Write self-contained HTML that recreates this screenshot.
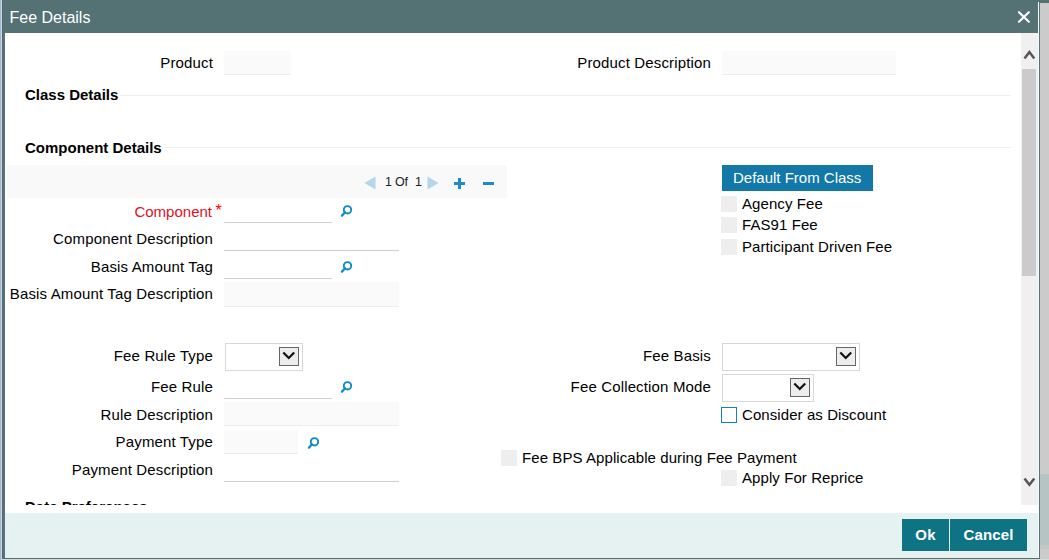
<!DOCTYPE html>
<html><head><meta charset="utf-8">
<style>
html,body{margin:0;padding:0;}
body{width:1049px;height:560px;position:relative;overflow:hidden;background:#cbcbcb;font-family:"Liberation Sans",sans-serif;}
.a{position:absolute;}
.t{position:absolute;font-size:15px;line-height:17px;white-space:nowrap;color:#000;letter-spacing:0.15px;}
.r{text-align:right;}
.b{font-weight:bold;}
.inp{position:absolute;border-bottom:1px solid #d0d0d0;height:0;}
.box{position:absolute;background:#fafafa;border-bottom:1px solid #ededed;}
.chk{position:absolute;width:16px;height:16px;background:#eeeeee;}
.sel{position:absolute;border:1px solid #d8d8d8;background:#fff;box-sizing:border-box;}
.selb{position:absolute;box-sizing:border-box;border:1px solid #666;background:#ededed;}
.srch{position:absolute;width:12px;height:12px;}
</style></head><body>
<svg width="0" height="0" style="position:absolute"><defs>
<symbol id="srch" viewBox="0 0 13 13"><circle cx="7.5" cy="5.8" r="3.7" stroke="#0a88cc" stroke-width="1.9" fill="none"/><path d="M5 8.3L1.9 11.7" stroke="#0a88cc" stroke-width="2.2" stroke-linecap="round"/></symbol>
<symbol id="chev" viewBox="0 0 20 19"><path d="M4.3 5.5L9.75 11L15.2 5.5" stroke="#111" stroke-width="2.2" fill="none"/></symbol>
</defs></svg>
<!-- left strip -->
<div class="a" style="left:0;top:0;width:1px;height:560px;background:#a4b8cc"></div>
<div class="a" style="left:1px;top:0;width:1px;height:560px;background:#ccd8ea"></div>
<div class="a" style="left:1040px;top:474px;width:9px;height:71px;background:#b6c4c4"></div>
<div class="a" style="left:1040px;top:545px;width:9px;height:4px;background:#c0c8c8"></div>
<!-- top teal band -->
<div class="a" style="left:2px;top:0;width:1047px;height:3px;background:#547174"></div>
<!-- dialog -->
<div class="a" style="left:2px;top:0;width:1px;height:559px;background:#56666f"></div>
<div class="a" style="left:3px;top:0;width:1035px;height:33px;background:#547174"></div>
<div class="a" style="left:3px;top:33px;width:2px;height:525px;background:#577573"></div>
<div class="a" style="left:1038px;top:2px;width:1px;height:556px;background:#f4fbfc"></div>
<div class="a" style="left:1039px;top:2px;width:1px;height:557px;background:#587474"></div>
<div class="a" style="left:5px;top:33px;width:1033px;height:480px;background:#fff"></div>
<!-- footer -->
<div class="a" style="left:5px;top:513px;width:1033px;height:45px;background:#e6f1f2"></div>
<div class="a" style="left:2px;top:558px;width:1038px;height:1px;background:#5a6c6c"></div>
<div class="a" style="left:2px;top:559px;width:1047px;height:1px;background:#d0dcdc"></div>

<!-- title -->
<div class="t" style="left:9.5px;top:9px;font-size:16px;line-height:18px;color:#fff;letter-spacing:0">Fee Details</div>
<svg class="a" style="left:1017px;top:10px" width="14" height="14" viewBox="0 0 14 14"><path d="M2 2.2L11.8 11.8M11.8 2.2L2 11.8" stroke="#fff" stroke-width="2.2" stroke-linecap="round"/></svg>

<!-- scrollbar -->
<div class="a" style="left:1021px;top:33px;width:17px;height:472px;background:#f0f0f0"></div>
<div class="a" style="left:1022px;top:69px;width:14px;height:207px;background:#cbcbcb"></div>
<svg class="a" style="left:1022px;top:48px" width="15" height="13" viewBox="0 0 15 13"><path d="M2.5 10.4L7.4 4.1L12.3 10.4" stroke="#555" stroke-width="2.5" fill="none"/></svg>
<svg class="a" style="left:1022px;top:475px" width="15" height="13" viewBox="0 0 15 13"><path d="M2.5 3.4L7.4 9.7L12.3 3.4" stroke="#555" stroke-width="2.5" fill="none"/></svg>

<!-- Product row -->
<div class="t r" style="left:0;width:213px;top:54px">Product</div>
<div class="box" style="left:224px;top:51px;width:67px;height:23px;"></div>
<div class="t r" style="left:0;width:711px;top:54px">Product Description</div>
<div class="box" style="left:722px;top:51px;width:174px;height:23px;"></div>

<!-- Class Details -->
<div class="a" style="left:25px;top:95px;width:986px;height:1px;background:#efefef"></div>
<div class="t b" style="left:25px;top:86px;background:#fff;padding-right:2px;letter-spacing:0">Class Details</div>

<!-- Component Details -->
<div class="a" style="left:25px;top:147px;width:986px;height:1px;background:#efefef"></div>
<div class="t b" style="left:25px;top:139px;background:#fff;padding-right:2px;letter-spacing:0">Component Details</div>

<!-- pagination bar -->
<div class="a" style="left:7px;top:165px;width:500px;height:33px;background:#f9f9f9"></div>
<svg class="a" style="left:364px;top:176px" width="12" height="14" viewBox="0 0 12 14"><path d="M11.5 0.5L0.5 7L11.5 13.5Z" fill="#b3d6ea"/></svg>
<div class="t" style="left:385px;top:175.1px;font-size:12.5px;line-height:15px;letter-spacing:0;color:#222">1</div>
<div class="t" style="left:395px;top:175.1px;font-size:12.5px;line-height:15px;letter-spacing:-0.3px;color:#222">Of</div>
<div class="t" style="left:415px;top:175.1px;font-size:12.5px;line-height:15px;letter-spacing:0;color:#222">1</div>

<svg class="a" style="left:427px;top:176px" width="12" height="14" viewBox="0 0 12 14"><path d="M0.5 0.5L11.5 7L0.5 13.5Z" fill="#b3d6ea"/></svg>
<div class="a" style="left:454px;top:182px;width:11px;height:3px;background:#1c8acb"></div>
<div class="a" style="left:458px;top:178px;width:3px;height:11px;background:#1c8acb"></div>
<div class="a" style="left:483px;top:182px;width:11px;height:3px;background:#1c8acb"></div>

<!-- Default From Class -->
<div class="a" style="left:722px;top:165px;width:151px;height:26px;background:#1178a7"></div>
<div class="t" style="left:733px;top:169px;color:#fff;letter-spacing:0">Default From Class</div>
<div class="chk" style="left:721px;top:196px"></div>
<div class="t" style="left:742px;top:195px;letter-spacing:0.08px">Agency Fee</div>
<div class="chk" style="left:721px;top:217px"></div>
<div class="t" style="left:742px;top:216px;letter-spacing:0.08px">FAS91 Fee</div>
<div class="chk" style="left:721px;top:239px"></div>
<div class="t" style="left:742px;top:238px;letter-spacing:0.08px">Participant Driven Fee</div>

<!-- component fields -->
<div class="t r" style="left:0;width:212px;top:203px;color:#e0101e;letter-spacing:0">Component</div>
<div class="t" style="left:215.5px;top:201.5px;color:#f00;font-size:16px">*</div>
<div class="inp" style="left:224px;top:222px;width:108px"></div>
<svg class="a" style="left:340px;top:204px" width="13" height="13"><use href="#srch"/></svg>
<div class="t r" style="left:0;width:213px;top:230px">Component Description</div>
<div class="inp" style="left:224px;top:250px;width:175px"></div>
<div class="t r" style="left:0;width:213px;top:258px">Basis Amount Tag</div>
<div class="inp" style="left:224px;top:278px;width:108px"></div>
<svg class="a" style="left:340px;top:260px" width="13" height="13"><use href="#srch"/></svg>
<div class="t r" style="left:0;width:213px;top:285px">Basis Amount Tag Description</div>
<div class="box" style="left:224px;top:282px;width:175px;height:24px"></div>

<!-- Fee rule section -->
<div class="t r" style="left:0;width:213px;top:347px">Fee Rule Type</div>
<div class="sel" style="left:225px;top:343px;width:78px;height:28px"></div>
<div class="selb" style="left:279px;top:347px;width:20px;height:19px"><svg class="a" style="left:-1px;top:-1px" width="20" height="19"><use href="#chev"/></svg></div>
<div class="t r" style="left:0;width:213px;top:378px">Fee Rule</div>
<div class="inp" style="left:224px;top:398px;width:108px"></div>
<svg class="a" style="left:340px;top:380px" width="13" height="13"><use href="#srch"/></svg>
<div class="t r" style="left:0;width:213px;top:406px">Rule Description</div>
<div class="box" style="left:224px;top:402px;width:175px;height:23px"></div>
<div class="t r" style="left:0;width:213px;top:433px">Payment Type</div>
<div class="box" style="left:224px;top:430px;width:74px;height:23px"></div>
<svg class="a" style="left:307px;top:436px" width="13" height="13"><use href="#srch"/></svg>
<div class="t r" style="left:0;width:213px;top:461px">Payment Description</div>
<div class="inp" style="left:224px;top:481px;width:175px"></div>

<div class="t r" style="left:0;width:711px;top:347px">Fee Basis</div>
<div class="sel" style="left:722px;top:343px;width:138px;height:28px"></div>
<div class="selb" style="left:836px;top:347px;width:20px;height:19px"><svg class="a" style="left:-1px;top:-1px" width="20" height="19"><use href="#chev"/></svg></div>
<div class="t r" style="left:0;width:711px;top:378px">Fee Collection Mode</div>
<div class="sel" style="left:722px;top:374px;width:92px;height:28px"></div>
<div class="selb" style="left:790px;top:378px;width:20px;height:19px"><svg class="a" style="left:-1px;top:-1px" width="20" height="19"><use href="#chev"/></svg></div>
<div class="a" style="left:721px;top:407px;width:16px;height:16px;box-sizing:border-box;border:1px solid #1481c4;background:#fff"></div>
<div class="t" style="left:742px;top:406px;letter-spacing:0.08px">Consider as Discount</div>

<div class="chk" style="left:501px;top:450px"></div>
<div class="t" style="left:522px;top:449px;letter-spacing:0.08px">Fee BPS Applicable during Fee Payment</div>
<div class="chk" style="left:721px;top:470px"></div>
<div class="t" style="left:742px;top:469px;letter-spacing:0.08px">Apply For Reprice</div>

<!-- Date Preferences clipped -->
<div class="a" style="left:5px;top:490px;width:1016px;height:15px;overflow:hidden">
  <div class="t b" style="left:20px;top:7.5px;letter-spacing:0">Date Preferences</div>
</div>

<!-- footer buttons -->
<div class="a" style="left:902px;top:519px;width:47px;height:32px;background:#0e7383"></div>
<div class="a" style="left:950px;top:519px;width:77px;height:32px;background:#0e7383"></div>
<div class="t b" style="left:902px;width:47px;text-align:center;top:526px;color:#fff">Ok</div>
<div class="t b" style="left:950px;width:77px;text-align:center;top:526px;color:#fff">Cancel</div>
</body></html>
